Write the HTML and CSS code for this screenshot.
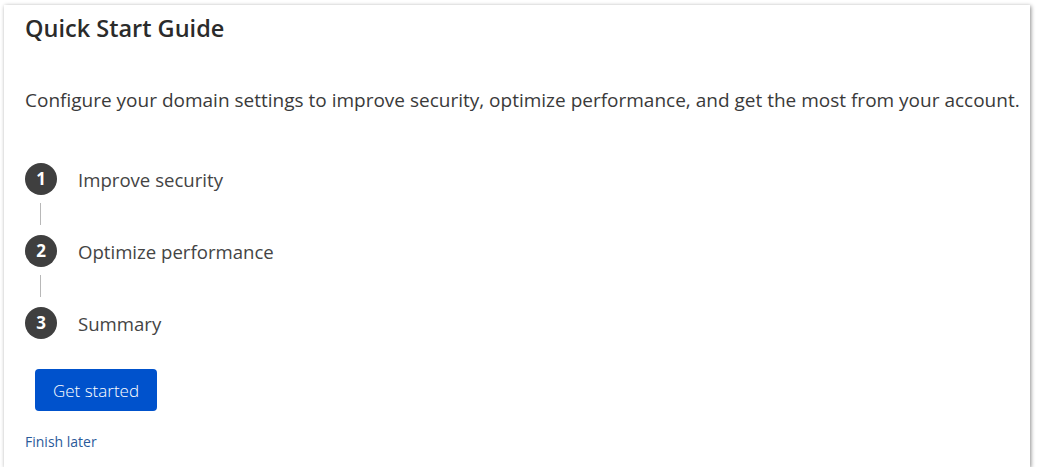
FILE: index.html
```html
<!DOCTYPE html>
<html lang="en">
<head>
  <meta charset="utf-8">
  <title>Quick Start Guide</title>
  <link rel="stylesheet" href="styles.css">
</head>
<body>

<div class="card">
  <h1 class="title">Quick Start Guide</h1>

  <p class="intro">Configure your domain settings to improve security, optimize performance, and get the most from your account.</p>

  <ol class="steps">
    <li class="step"><span class="num">1</span><span class="label">Improve security</span></li>
    <li class="link"></li>
    <li class="step"><span class="num">2</span><span class="label">Optimize performance</span></li>
    <li class="link"></li>
    <li class="step"><span class="num">3</span><span class="label">Summary</span></li>
  </ol>

  <button class="start" type="button">Get started</button>

  <a class="later" href="#">Finish later</a>
</div>

</body>
</html>
```

FILE: styles.css
```css
html {
  height: 100%;
}
body {
  margin: 0;
  padding: 0;
  background: #ffffff;
  color: #333333;
  font-family: "Open Sans", "Noto Sans", sans-serif;
}

.card {
  width: 1026px;
  height: 462px;
  margin: 5px 0 0 4px;
  box-sizing: border-box;
  padding: 8px 10px 0 21px;
  background: #ffffff;
  box-shadow: 1px 1px 4px rgba(0, 0, 0, 0.45);
  display: flex;
  flex-direction: column;
  align-items: flex-start;
}

.title {
  margin: 0;
  font-size: 23.5px;
  font-weight: 600;
  line-height: 30px;
  color: #2b2b2b;
}

.intro {
  margin: 44px 0 0 0;
  font-size: 19px;
  line-height: 26px;
  color: #3a3a3a;
  white-space: nowrap;
}

.steps {
  list-style: none;
  margin: 50px 0 0 0;
  padding: 0;
}

.step {
  display: flex;
  align-items: center;
  height: 32px;
}

.num {
  width: 32px;
  height: 32px;
  border-radius: 50%;
  background: #3f3f3f;
  color: #ffffff;
  font-size: 17px;
  font-weight: 700;
  line-height: 32px;
  text-align: center;
}

.label {
  margin-left: 21px;
  font-size: 18.6px;
  color: #444444;
}

.link {
  width: 1px;
  height: 22px;
  margin: 8px 0 10px 15px;
  background: #b8b8b8;
}

.start {
  margin: 30px 0 0 10px;
  width: 122px;
  height: 42px;
  border: none;
  border-radius: 4px;
  background: #0052cc;
  color: #ffffff;
  font-family: inherit;
  font-size: 17px;
  font-weight: 300;
  cursor: pointer;
}

.later {
  margin-top: 21px;
  font-size: 14px;
  color: #2a5a9a;
  text-decoration: none;
}
.later:hover {
  text-decoration: underline;
}
```
